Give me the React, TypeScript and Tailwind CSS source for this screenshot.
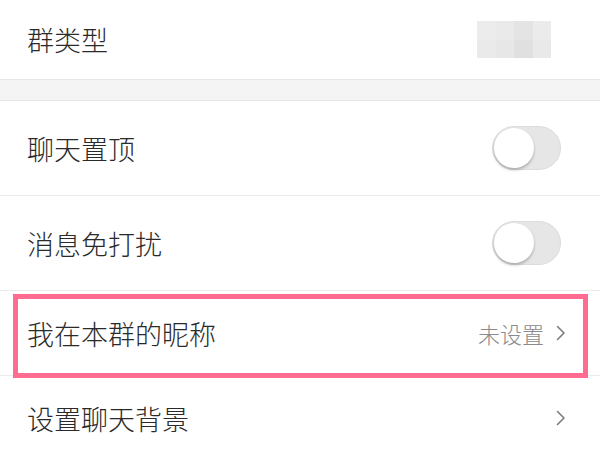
import React from 'react';

// Chevron used on navigable rows
function Chevron() {
  return (
    <svg width="10" height="16" viewBox="0 0 10 16" fill="none" className="shrink-0">
      <polyline points="1.5,1.5 8,8 1.5,14.5" stroke="#7d7d7d" strokeWidth="1.6" strokeLinecap="round" strokeLinejoin="round" />
    </svg>
  );
}

function Toggle() {
  return (
    <div className="w-[69px] h-[44px] rounded-full bg-[#e6e6e6] border border-[#dcdcdc] flex items-center px-[1px]">
      <div className="w-[40px] h-[40px] rounded-full bg-white shadow-[0_2px_3px_rgba(0,0,0,0.25)]" />
    </div>
  );
}

// blurred value in the first row
function Pixelated() {
  const cells = ['#ececec', '#eaeaea', '#e4e4e4', '#ebebeb', '#eaeaea', '#e7e7e7', '#e0e0e0', '#e9e9e9'];
  return (
    <div className="grid grid-cols-4 w-[74px] h-[37px]">
      {cells.map((c, i) => (
        <div key={i} style={{ backgroundColor: c }} />
      ))}
    </div>
  );
}

export default function App() {
  const label = 'text-[27px] font-light text-[#2a2a2a] leading-none';
  return (
    <div
      className="w-[600px] h-[450px] overflow-hidden bg-white"
      style={{ fontFamily: '"Noto Sans CJK SC", "Noto Sans", sans-serif' }}
    >
      <div className="h-[79px] flex items-center justify-between pl-[27px] pr-[49px]">
        <span className={label}>群类型</span>
        <Pixelated />
      </div>

      <div className="h-[22px] bg-[#f4f4f4] border-y border-[#e6e6e6]" />

      <div className="h-[95px] flex items-center justify-between pl-[27px] pr-[39px] border-b border-[#ebebeb]">
        <span className={label}>聊天置顶</span>
        <Toggle />
      </div>

      <div className="h-[95px] flex items-center justify-between pl-[27px] pr-[39px] border-b border-[#ebebeb]">
        <span className={label}>消息免打扰</span>
        <Toggle />
      </div>

      <div className="relative h-[85px] flex items-center justify-between pl-[27px] pr-[34px] border-b border-[#ebebeb]">
        <span className={label}>我在本群的昵称</span>
        <div className="flex items-center gap-[12px]">
          <span className="text-[22px] font-light text-[#8a8a8a] leading-none">未设置</span>
          <Chevron />
        </div>
        <div className="absolute left-[13px] right-[12px] top-[3px] -bottom-[3px] border-[5px] border-[#ff6b91]" />
      </div>

      <div className="h-[84px] flex items-center justify-between pl-[27px] pr-[34px]">
        <span className={label}>设置聊天背景</span>
        <Chevron />
      </div>
    </div>
  );
}
